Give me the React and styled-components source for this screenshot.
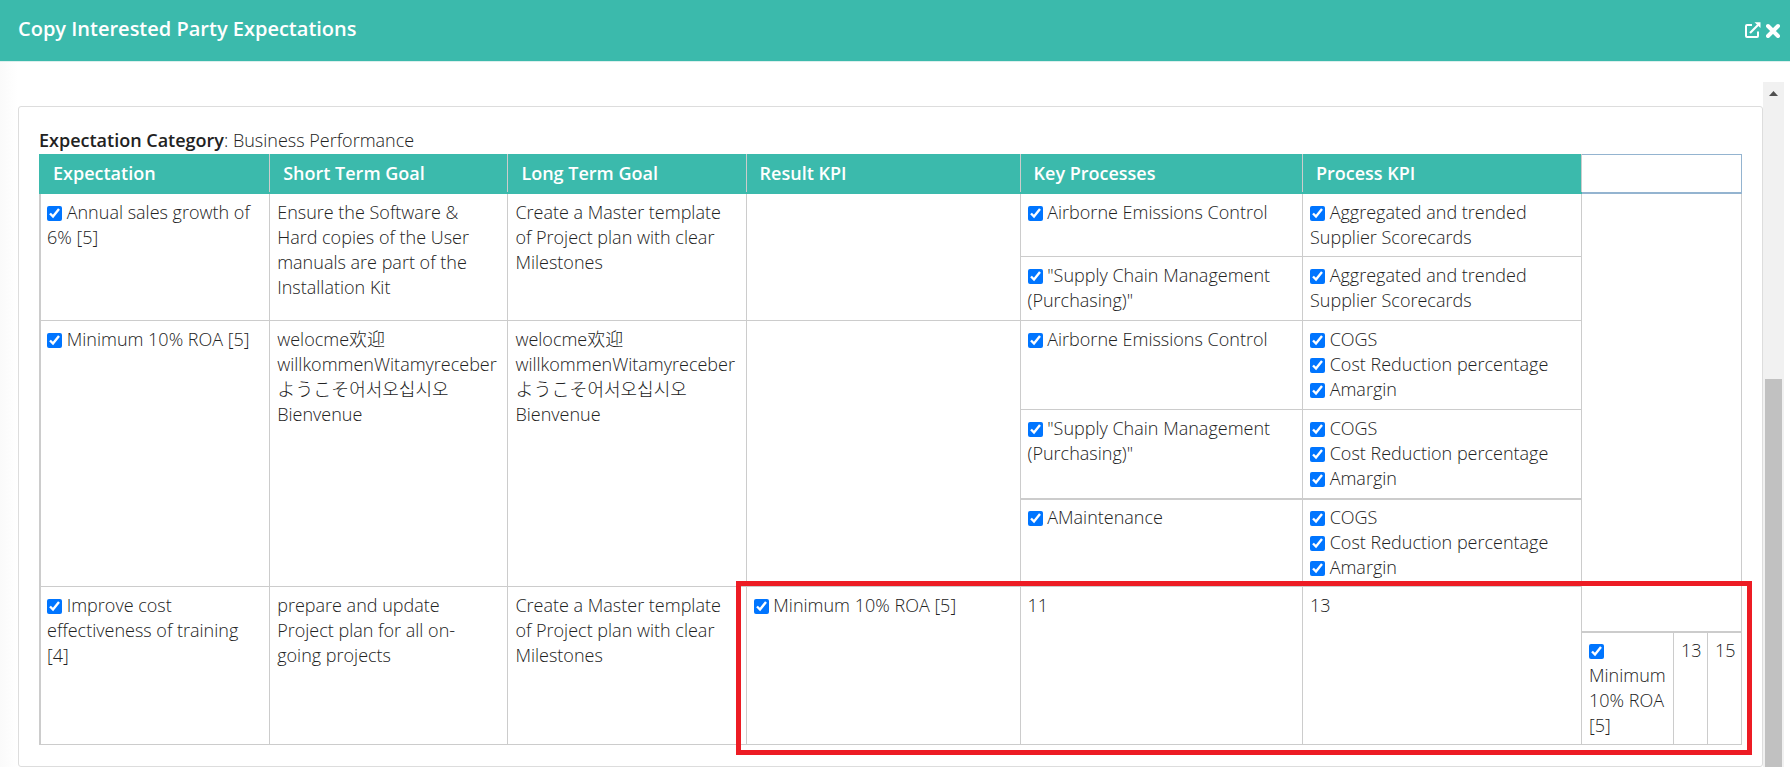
import React from "react";
import styled, { createGlobalStyle } from "styled-components";

const GlobalStyle = createGlobalStyle`
  * {
    box-sizing: border-box;
  }

  body {
    margin: 0;
    background: #fff;
    color: #222;
    font-family: "Open Sans", "Noto Sans CJK SC", "Noto Sans CJK KR", sans-serif;
    font-size: 18px;
    font-weight: 300;
    line-height: 25px;
  }
`;

const Dialog = styled.div`
  display: flex;
  flex-direction: column;
  height: 100vh;
  overflow: hidden;
  background: linear-gradient(to right, #fafafa, #fff 18px);
`;

const Header = styled.header`
  display: flex;
  flex: none;
  align-items: center;
  justify-content: space-between;
  height: 62px;
  padding: 0 10px 4px 18px;
  background: #3bbaac;
  border-bottom: 1px solid #dcefed;
`;

const Title = styled.h1`
  margin: 0;
  color: #fff;
  font-size: 20px;
  font-weight: 600;
`;

const Actions = styled.div`
  display: flex;
  gap: 5px;
  padding-top: 2px;
`;

const IconButton = styled.button`
  display: flex;
  padding: 0;
  border: none;
  background: none;
  color: #fff;
  cursor: pointer;
`;

const Body = styled.div`
  display: flex;
  flex: 1;
  min-height: 0;
  padding: 20px 6px 0 18px;
`;

const Content = styled.main`
  flex: 1;
  min-width: 0;
  padding-top: 24px;
`;

const Panel = styled.section`
  padding: 21px 20px;
  border: 1px solid #ddd;
  border-radius: 3px;
  background: #fff;
`;

const Category = styled.p`
  margin: 0;
  padding-bottom: 1px;
`;

const CategoryName = styled.span`
  font-weight: 600;
`;

const TableArea = styled.div`
  position: relative;
`;

const Table = styled.table`
  width: 100%;
  table-layout: fixed;
  border-collapse: collapse;
  border-left: 2px solid #ccc;
`;

const Col = styled.col`
  width: ${({ $width }) => $width};
`;

const HeadCell = styled.th`
  padding: 6px 13px;
  background: ${({ $blank }) => ($blank ? "#fff" : "#3bbaac")};
  border: 1px solid ${({ $blank }) => ($blank ? "#94b4d0" : "#ccc")};
  border-top-color: ${({ $blank }) => ($blank ? "#94b4d0" : "#3bbaac")};
  border-bottom: 2px solid ${({ $blank }) => ($blank ? "#94b4d0" : "#3bbaac")};
  color: #fff;
  font-weight: 600;
  text-align: left;

  &:first-child {
    padding-left: 12px;
    border-left: 2px solid #3bbaac;
  }
`;

const Cell = styled.td`
  padding: ${({ $heavy }) => ($heavy ? "5px 6px 6px 7px" : "6px 12px 7px 7px")};
  border: 1px solid #ccc;
  border-top-width: ${({ $heavy }) => ($heavy ? "2px" : "1px")};
  vertical-align: top;

  tr:first-child > & {
    padding-bottom: 6px;
  }

  &[rowspan]:first-child {
    padding-left: 6px;
  }
`;

const Option = styled.label`
  display: block;
`;

const Checkbox = styled.input`
  width: 15px;
  height: 15px;
  margin: 0;
  vertical-align: -2px;
  accent-color: #0075ff;
`;

const Highlight = styled.div`
  position: absolute;
  right: -10px;
  bottom: -10px;
  left: 40.9%;
  height: 174px;
  border: 5px solid #ed1c24;
  pointer-events: none;
`;

const Scrollbar = styled.div`
  display: flex;
  flex-direction: column;
  align-items: center;
  flex: none;
  width: 21px;
  background: #f1f1f1;
`;

const ScrollArrow = styled.svg`
  flex: none;
  margin-top: 9px;
`;

const ScrollThumb = styled.div`
  flex: 1;
  width: 17px;
  margin-top: 283px;
  background: #c1c1c1;
`;

const columnWidths = ["13.5%", "14%", "14%", "16.1%", "16.6%", "16.4%", "5.4%", "2%", "2%"];
const headings = [
  "Expectation",
  "Short Term Goal",
  "Long Term Goal",
  "Result KPI",
  "Key Processes",
  "Process KPI",
];

const masterTemplate = "Create a Master template of Project plan with clear Milestones";
const welcome = "welocme欢迎 willkommenWitamyreceberようこそ어서오십시오 Bienvenue";
const scorecards = ["Aggregated and trended Supplier Scorecards"];
const costKpis = ["COGS", "Cost Reduction percentage", "Amargin"];

const expectations = [
  {
    name: "Annual sales growth of 6% [5]",
    shortTerm:
      "Ensure the Software & Hard copies of the User manuals are part of the Installation Kit",
    longTerm: masterTemplate,
    processes: [
      { name: "Airborne Emissions Control", kpis: scorecards },
      { name: '"Supply Chain Management (Purchasing)"', kpis: scorecards },
    ],
  },
  {
    name: "Minimum 10% ROA [5]",
    shortTerm: welcome,
    longTerm: welcome,
    processes: [
      { name: "Airborne Emissions Control", kpis: costKpis },
      { name: '"Supply Chain Management (Purchasing)"', kpis: costKpis },
      { name: "AMaintenance", kpis: costKpis, heavy: true },
    ],
  },
];

const CheckOption = ({ children }) => (
  <Option>
    <Checkbox type="checkbox" defaultChecked /> {children}
  </Option>
);

const ExternalIcon = () => (
  <svg width="16" height="16" viewBox="0 0 16 16" fill="none" aria-hidden="true">
    <path
      d="M7 3H2a1 1 0 0 0-1 1V14a1 1 0 0 0 1 1h10a1 1 0 0 0 1-1V9.500"
      stroke="currentColor"
      strokeWidth="2"
    />
    <path d="M5 11 13 3" stroke="currentColor" strokeWidth="2.200" />
    <path d="M9.500.3H15.500V6z" fill="currentColor" />
  </svg>
);

const CloseIcon = () => (
  <svg width="14" height="16" viewBox="0 0 14 16" fill="none" aria-hidden="true">
    <path
      d="M2 4 12 14M12 4 2 14"
      stroke="currentColor"
      strokeWidth="4"
      strokeLinecap="round"
    />
  </svg>
);

const ExpectationRows = ({ item, first }) =>
  item.processes.map((process, index) => (
    <tr key={process.name}>
      {index === 0 && (
        <>
          <Cell rowSpan={item.processes.length}>
            <CheckOption>{item.name}</CheckOption>
          </Cell>
          <Cell rowSpan={item.processes.length}>{item.shortTerm}</Cell>
          <Cell rowSpan={item.processes.length}>{item.longTerm}</Cell>
          <Cell rowSpan={item.processes.length} />
        </>
      )}
      <Cell $heavy={process.heavy}>
        <CheckOption>{process.name}</CheckOption>
      </Cell>
      <Cell $heavy={process.heavy}>
        {process.kpis.map((kpi) => (
          <CheckOption key={kpi}>{kpi}</CheckOption>
        ))}
      </Cell>
      {first && index === 0 && <Cell colSpan={3} rowSpan={6} />}
    </tr>
  ));

const FillerRow = styled.tr`
  height: 45px;
`;

const App = () => (
  <Dialog>
    <GlobalStyle />
    <Header>
      <Title>Copy Interested Party Expectations</Title>
      <Actions>
        <IconButton type="button" aria-label="Open in new window">
          <ExternalIcon />
        </IconButton>
        <IconButton type="button" aria-label="Close">
          <CloseIcon />
        </IconButton>
      </Actions>
    </Header>
    <Body>
      <Content>
        <Panel>
          <Category>
            <CategoryName>Expectation Category</CategoryName>: Business Performance
          </Category>
          <TableArea>
            <Table>
              <colgroup>
                {columnWidths.map((width, index) => (
                  <Col key={index} $width={width} />
                ))}
              </colgroup>
              <thead>
                <tr>
                  {headings.map((heading) => (
                    <HeadCell key={heading}>{heading}</HeadCell>
                  ))}
                  <HeadCell colSpan={3} $blank />
                </tr>
              </thead>
              <tbody>
                {expectations.map((item, index) => (
                  <ExpectationRows key={item.name} item={item} first={index === 0} />
                ))}
                <FillerRow>
                  <Cell rowSpan={2}>
                    <CheckOption>Improve cost effectiveness of training [4]</CheckOption>
                  </Cell>
                  <Cell rowSpan={2}>prepare and update Project plan for all on-going projects</Cell>
                  <Cell rowSpan={2}>{masterTemplate}</Cell>
                  <Cell rowSpan={2}>
                    <CheckOption>Minimum 10% ROA [5]</CheckOption>
                  </Cell>
                  <Cell rowSpan={2}>11</Cell>
                  <Cell rowSpan={2}>13</Cell>
                </FillerRow>
                <tr>
                  <Cell $heavy>
                    <CheckOption>Minimum 10% ROA [5]</CheckOption>
                  </Cell>
                  <Cell $heavy>13</Cell>
                  <Cell $heavy>15</Cell>
                </tr>
              </tbody>
            </Table>
            <Highlight />
          </TableArea>
        </Panel>
      </Content>
      <Scrollbar>
        <ScrollArrow width="9" height="5" viewBox="0 0 9 5" aria-hidden="true">
          <path d="M0 5 4.500 0 9 5z" fill="#505050" />
        </ScrollArrow>
        <ScrollThumb />
      </Scrollbar>
    </Body>
  </Dialog>
);

export default App;
